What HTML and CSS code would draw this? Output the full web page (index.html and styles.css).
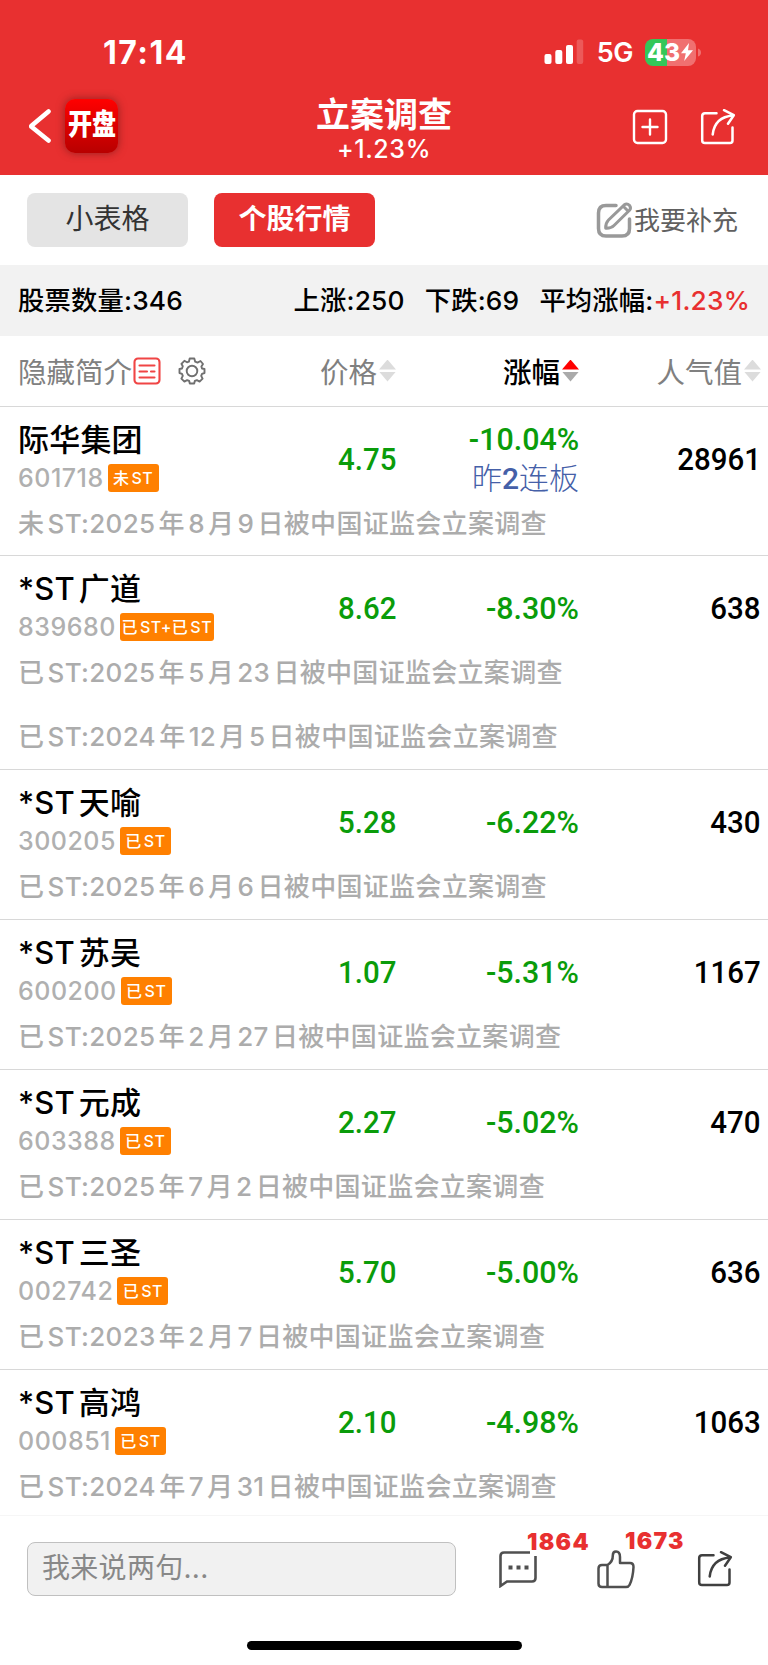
FILE: index.html
```
<!DOCTYPE html>
<html lang="zh-CN">
<head>
    <meta charset="UTF-8">
    <meta name="viewport" content="width=device-width, initial-scale=1.0">
    <link rel="stylesheet" href="styles.css">
    <title>立案调查</title>
</head>
<body>
    <header class="header">
        <div class="status">
            <span class="time">17:14</span>
            <div class="status-right">
                <svg class="signal" width="40" height="26" viewBox="0 0 40 26" fill="#fff">
                    <rect x="0.5" y="15" width="7" height="10" rx="2"/>
                    <rect x="11.3" y="11" width="7" height="14" rx="2"/>
                    <rect x="22" y="6" width="7" height="19" rx="2"/>
                    <rect x="32.7" y="0.5" width="6.5" height="24.5" rx="2" opacity="0.2"/>
                </svg>
                <span class="network">5G</span>
                <div class="battery">
                    <span>43</span>
                    <svg width="14" height="20" viewBox="0 0 14 20" fill="#fff"><path d="M9 1L1 11.2h4.8L4.2 19 13 8.200H8z"/></svg>
                </div>
                <svg class="battery-cap" width="3" height="9" viewBox="0 0 3 9"><path d="M0 0.500Q3 1.500 3 4.500T0 8.500z" fill="#f07070"/></svg>
            </div>
        </div>
        <div class="navbar">
            <div class="nav-left">
                <svg width="24" height="36" viewBox="0 0 24 36" fill="none" stroke="#fff" stroke-width="4.600" stroke-linecap="round" stroke-linejoin="round"><path d="M19.500 3.500L2.500 17.800Q2 18.300 2.500 18.800L19.500 32.500"/></svg>
                <div class="logo"><span>开盘</span></div>
            </div>
            <div class="nav-title">
                <h1>立案调查</h1>
                <p>+1.23%</p>
            </div>
            <div class="nav-right">
                <svg width="36" height="36" viewBox="0 0 36 36" fill="none" stroke="#fff" stroke-width="2.400" stroke-linecap="round"><rect x="2" y="2" width="32" height="32" rx="3.500"/><path d="M18 10.500v15M10.500 18h15"/></svg>
                <svg width="36" height="36" viewBox="0 0 36 36" fill="none" stroke="#fff" stroke-width="2.500" stroke-linecap="round" stroke-linejoin="round"><path d="M16.500 4.200H5Q2.200 4.200 2.200 7V31.500Q2.200 34 5 34H30Q32.500 34 32.500 31.500V18.500"/><path d="M12.700 25.500C14 14 20.500 7.500 33 6.500M24 1.200l9.800 5-5.800 8.500"/></svg>
            </div>
        </div>
    </header>

    <div class="tabs">
        <button class="tab">小表格</button>
        <button class="tab active">个股行情</button>
        <a class="add">
            <svg width="38" height="38" viewBox="0 0 38 38" fill="none" stroke="#999" stroke-width="3.500" stroke-linecap="round" stroke-linejoin="round"><path d="M20 4.500H10Q2.500 4.500 2.500 12V27.500Q2.500 35 10 35H26Q33.500 35 33.500 27.500V18"/><path d="M9.700 27.200Q9.500 22 12.500 19L28.300 3.800Q31 2 33.500 4.300 35.500 7 33.500 9.300L18 24.500Q15 27.500 9.700 27.200zM27.500 5.500l4.500 4.500" stroke-width="3"/></svg>
            <span>我要补充</span>
        </a>
    </div>

    <div class="summary">
        <span>股票数量:346</span>
        <div class="summary-right">
            <span>上涨:250</span>
            <span>下跌:69</span>
            <span>平均涨幅:<b>+1.23%</b></span>
        </div>
    </div>

    <div class="cols thead">
        <div class="toggle">
            <span>隐藏简介</span>
            <svg width="28" height="28" viewBox="0 0 28 28" fill="none" stroke="#f04545" stroke-width="2.100" stroke-linecap="round"><rect x="1.500" y="1.500" width="25" height="25" rx="3.500"/><path d="M6.500 8.500h15M6.500 14.500h7.500M6.500 20.500h15M18 14.500h3.500"/></svg>
            <svg class="gear" width="28" height="28" viewBox="0 0 28 28" fill="none" stroke="#707070" stroke-width="1.900" stroke-linejoin="round"><circle cx="14" cy="14" r="5.300"/><path d="M11.700 1.500h4.600L17.200 4.700 19.500 5.600 22.500 4 25 7 23.400 9.500 24 11.500 26.500 12V16L24 16.800 23.200 18.900 24.600 21.600 21.600 24.600 18.900 23.200 16.800 24 16.200 26.500H11.800L11.200 24 9.100 23.200 6.400 24.600 3.400 21.600 4.800 18.900 4 16.800 1.500 16V12L4 11.500 4.800 9.300 3.400 6.800 6.400 3.800 9 5.300 10.900 4.700z"/></svg>
        </div>
        <div class="sort">价格<i class="arrows"></i></div>
        <div class="sort on">涨幅<i class="arrows"></i></div>
        <div class="sort">人气值<i class="arrows"></i></div>
    </div>

    <main class="list">
        <div class="stock">
            <div class="cols">
                <div class="info">
                    <div class="name">际华集团</div>
                    <div class="code">601718<span class="tag">未ST</span></div>
                </div>
                <div class="num down"><span>4.75</span></div>
                <div class="num down rate"><span>-10.04%</span><em>昨<b>2</b>连板</em></div>
                <div class="num"><span>28961</span></div>
            </div>
            <p class="desc">未ST:2025年8月9日被中国证监会立案调查</p>
        </div>
        <div class="stock">
            <div class="cols">
                <div class="info">
                    <div class="name">*ST广道</div>
                    <div class="code">839680<span class="tag wide">已ST+已ST</span></div>
                </div>
                <div class="num down"><span>8.62</span></div>
                <div class="num down rate"><span>-8.30%</span></div>
                <div class="num"><span>638</span></div>
            </div>
            <p class="desc">已ST:2025年5月23日被中国证监会立案调查</p>
            <p class="desc">已ST:2024年12月5日被中国证监会立案调查</p>
        </div>
        <div class="stock">
            <div class="cols">
                <div class="info">
                    <div class="name">*ST天喻</div>
                    <div class="code">300205<span class="tag">已ST</span></div>
                </div>
                <div class="num down"><span>5.28</span></div>
                <div class="num down rate"><span>-6.22%</span></div>
                <div class="num"><span>430</span></div>
            </div>
            <p class="desc">已ST:2025年6月6日被中国证监会立案调查</p>
        </div>
        <div class="stock">
            <div class="cols">
                <div class="info">
                    <div class="name">*ST苏吴</div>
                    <div class="code">600200<span class="tag">已ST</span></div>
                </div>
                <div class="num down"><span>1.07</span></div>
                <div class="num down rate"><span>-5.31%</span></div>
                <div class="num"><span>1167</span></div>
            </div>
            <p class="desc">已ST:2025年2月27日被中国证监会立案调查</p>
        </div>
        <div class="stock">
            <div class="cols">
                <div class="info">
                    <div class="name">*ST元成</div>
                    <div class="code">603388<span class="tag">已ST</span></div>
                </div>
                <div class="num down"><span>2.27</span></div>
                <div class="num down rate"><span>-5.02%</span></div>
                <div class="num"><span>470</span></div>
            </div>
            <p class="desc">已ST:2025年7月2日被中国证监会立案调查</p>
        </div>
        <div class="stock">
            <div class="cols">
                <div class="info">
                    <div class="name">*ST三圣</div>
                    <div class="code">002742<span class="tag">已ST</span></div>
                </div>
                <div class="num down"><span>5.70</span></div>
                <div class="num down rate"><span>-5.00%</span></div>
                <div class="num"><span>636</span></div>
            </div>
            <p class="desc">已ST:2023年2月7日被中国证监会立案调查</p>
        </div>
        <div class="stock">
            <div class="cols">
                <div class="info">
                    <div class="name">*ST高鸿</div>
                    <div class="code">000851<span class="tag">已ST</span></div>
                </div>
                <div class="num down"><span>2.10</span></div>
                <div class="num down rate"><span>-4.98%</span></div>
                <div class="num"><span>1063</span></div>
            </div>
            <p class="desc">已ST:2024年7月31日被中国证监会立案调查</p>
        </div>
    </main>

    <footer class="footer">
        <div class="footer-row">
            <div class="comment-box">我来说两句...</div>
            <div class="action">
                <svg width="38" height="38" viewBox="0 0 38 38" fill="none" stroke="#505050" stroke-width="2.600"><path d="M31 2.500H5Q1.500 2.500 1.500 6V36L8 31.500H33Q36.500 31.500 36.500 28V6"/><path d="M9.500 17.500h4M17.500 17.500h4M25.500 17.500h4" stroke-width="4"/></svg>
                <span class="count">1864</span>
            </div>
            <div class="action">
                <svg width="38" height="40" viewBox="0 0 38 40" fill="none" stroke="#505050" stroke-width="2.500" stroke-linejoin="round"><path d="M10.500 16Q16 12.500 15.800 6.500 15.800 2.500 19 2.500 23 2.500 23 8V14H33Q36.500 14 36.500 18 36 29 32.500 36 31.500 38 29 38H5Q1.500 38 1.500 34.500V19.500Q1.500 16 5 16zM10.500 16V38"/></svg>
                <span class="count">1673</span>
            </div>
            <div class="action share">
                <svg width="36" height="36" viewBox="0 0 36 36" fill="none" stroke="#404040" stroke-width="2.500" stroke-linecap="round" stroke-linejoin="round"><path d="M16.500 4.200H5Q2.200 4.200 2.200 7V31.500Q2.200 34 5 34H30Q32.500 34 32.500 31.500V18.500"/><path d="M12.700 25.500C14 14 20.500 7.500 33 6.500M24 1.200l9.800 5-5.800 8.500"/></svg>
            </div>
        </div>
        <div class="home-bar"></div>
    </footer>
</body>
</html>
```
FILE: styles.css
```
* {
    box-sizing: border-box;
    margin: 0;
    padding: 0;
}

body {
    width: 768px;
    height: 1665px;
    display: flex;
    flex-direction: column;
    overflow: hidden;
    background: #fff;
    color: #000;
    font-family: Inter, "Noto Sans CJK SC", sans-serif;
    text-autospace: normal;
    white-space: nowrap;
}

svg {
    display: block;
    flex: none;
}

/* header */
.header {
    height: 174.500px;
    flex: none;
    background: #e83030;
    color: #fff;
}

.status {
    height: 90px;
    padding: 14px 67px 0 103px;
    display: flex;
    align-items: center;
    justify-content: space-between;
}

.time {
    font-size: 32px;
    font-weight: 700;
    letter-spacing: 1.500px;
}

.status-right {
    display: flex;
    align-items: center;
}

.network {
    margin: 0 12px 0 13px;
    font-size: 27px;
    font-weight: 600;
    letter-spacing: -0.5px;
}

.battery {
    width: 51px;
    height: 27px;
    border-radius: 8px;
    display: flex;
    align-items: center;
    justify-content: center;
    background: linear-gradient(90deg, #34c759 22.500px, #f07070 22.500px);
    font-size: 24.500px;
    font-weight: 800;
    letter-spacing: -0.1px;
}

.battery-cap {
    margin-left: 2px;
}

.navbar {
    height: 76px;
    display: grid;
    grid-template-columns: 1fr 200px 1fr;
    align-items: center;
}

.nav-left {
    display: flex;
    align-items: center;
    gap: 12px;
    padding: 0 0 4px 29px;
}

.logo {
    width: 53px;
    height: 54px;
    border-radius: 10px;
    display: flex;
    align-items: center;
    justify-content: center;
    background: linear-gradient(#ff0000, #b80000);
    box-shadow: 0 0 8px rgba(90, 20, 20, 0.6);
    font-size: 29px;
    font-weight: 900;
    line-height: 50px;
}

.logo span {
    transform: scaleX(0.83);
    margin-bottom: 2px;
}

.nav-title {
    text-align: center;
    padding-top: 5px;
}

.nav-title h1 {
    font-size: 34px;
    line-height: 38px;
    font-weight: 700;
}

.nav-title p {
    font-size: 25px;
    line-height: 31px;
    font-weight: 500;
    letter-spacing: 0.6px;
}

.nav-right {
    display: flex;
    justify-content: flex-end;
    gap: 32px;
    padding: 0 32px 3px 0;
}

/* tabs */
.tabs {
    height: 90px;
    flex: none;
    display: flex;
    align-items: center;
    padding: 0 30px 0 27px;
}

.tab {
    width: 161px;
    height: 54px;
    margin-right: 26px;
    border: none;
    border-radius: 8px;
    background: #e4e4e4;
    color: #333;
    font-family: inherit;
    font-size: 28px;
    line-height: 53px;
    padding-bottom: 1px;
}

.tab.active {
    background: #e83030;
    color: #fff;
    font-weight: 700;
}

.add {
    margin-left: auto;
    display: flex;
    align-items: center;
    color: #606060;
    font-size: 26px;
}

.add span {
    padding-bottom: 2px;
}

/* summary */
.summary {
    height: 71px;
    flex: none;
    display: flex;
    align-items: center;
    justify-content: space-between;
    padding: 0 18px 3px 18px;
    background: #f2f2f2;
    font-size: 26.300px;
    font-weight: 500;
    letter-spacing: 0.2px;
    text-autospace: no-autospace;
}

.summary-right {
    display: flex;
    gap: 20px;
}

.summary b {
    font-weight: 500;
    color: #e83030;
}

/* table */
.cols {
    display: grid;
    grid-template-columns: 220px 158px 183px 182px;
    padding-left: 18px;
}

.thead {
    height: 71px;
    flex: none;
    align-items: center;
    border-bottom: 1px solid #d8d8d8;
    color: #808080;
    font-size: 28.500px;
}

.toggle {
    display: flex;
    align-items: center;
}

.toggle span {
    width: 115px;
}

.gear {
    margin-left: 17px;
}

.sort {
    display: flex;
    align-items: center;
    justify-content: flex-end;
}

.sort.on {
    color: #000;
    font-weight: 500;
}

.arrows {
    display: grid;
    gap: 2px;
    margin-left: 2px;
}

.arrows::before,
.arrows::after {
    content: "";
    width: 17px;
    height: 10px;
    background: #dcdcdc;
    clip-path: polygon(50% 0, 100% 100%, 0 100%);
}

.arrows::after {
    clip-path: polygon(0 0, 100% 0, 50% 100%);
}

.on .arrows::before {
    background: #ff0000;
}

.on .arrows::after {
    background: #aaa;
}

.list {
    flex: 1;
    min-height: 0;
    overflow: hidden;
}

.stock {
    padding: 14px 0 6.900px;
    border-bottom: 1px solid #d8d8d8;
}

.stock:last-child {
    border-bottom: none;
}

.name {
    height: 37px;
    line-height: 37px;
    font-size: 31px;
    font-weight: 500;
    letter-spacing: 0.2px;
}

.code {
    height: 40px;
    display: flex;
    align-items: center;
    color: #b0b0b0;
    font-size: 25px;
    font-weight: 500;
    letter-spacing: 0.5px;
}

.tag {
    width: 51px;
    height: 28px;
    margin-left: 4px;
    border-radius: 3px;
    background: #ff8000;
    color: #fff;
    font-size: 16px;
    font-weight: 500;
    line-height: 28px;
    text-align: center;
}

.tag.wide {
    width: 94px;
}

.num {
    height: 77px;
    display: flex;
    flex-direction: column;
    align-items: flex-end;
    justify-content: center;
    font-family: Roboto, "Noto Sans CJK SC", sans-serif;
    font-size: 32px;
    font-weight: 500;
    line-height: 39px;
    text-autospace: no-autospace;
}

.num span {
    transform: scaleX(0.92);
    transform-origin: right;
}

.num.rate span {
    transform: scaleX(0.95);
}

.down {
    color: #0a9c0a;
}

.num em {
    color: #4560a8;
    font-size: 30px;
    font-style: normal;
    font-weight: 300;
}

.num em b {
    font-weight: 500;
}

.desc {
    padding-left: 18px;
    line-height: 51px;
    font-size: 26px;
    font-weight: 500;
    letter-spacing: 0.3px;
    color: #acacac;
}

.desc + .desc {
    margin-top: 13px;
}

/* footer */
.footer {
    height: 150px;
    flex: none;
    border-top: 1px solid #f6f6f6;
}

.footer-row {
    height: 105px;
    display: flex;
    align-items: center;
    padding-left: 27px;
}

.comment-box {
    width: 429px;
    height: 54px;
    padding-left: 14px;
    border: 1px solid #c0c0c0;
    border-radius: 8px;
    background: #f1f1f1;
    color: #888;
    font-size: 28px;
    line-height: 51px;
    letter-spacing: 0.3px;
    text-autospace: no-autospace;
}

.action {
    position: relative;
    width: 38px;
    margin-left: 43px;
}

.action + .action {
    margin-left: 60px;
}

.action.share {
    margin-left: 62px;
}

.count {
    position: absolute;
    left: 28px;
    top: -22px;
    color: #e83030;
    font-size: 23px;
    font-weight: 900;
    letter-spacing: 1.300px;
}

.home-bar {
    width: 275px;
    height: 9px;
    margin: 20px auto 0;
    border-radius: 5px;
    background: #000;
}
```
